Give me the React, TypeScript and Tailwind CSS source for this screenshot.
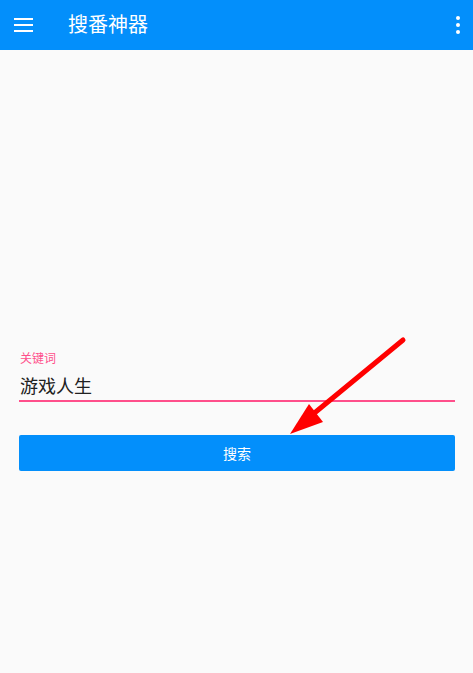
import React from "react";

export default function App() {
  const font = { fontFamily: '"Noto Sans", "Noto Sans CJK SC", sans-serif' };
  return (
    <div className="relative w-[473px] h-[673px] bg-[#fafafa] overflow-hidden" style={font}>
      <div className="h-[50px] bg-[#038ffb] flex items-center">
        <div className="w-[68px] pl-[14px] flex flex-col gap-[4px]">
          <div className="w-[19px] h-[2px] bg-white" />
          <div className="w-[19px] h-[2px] bg-white" />
          <div className="w-[19px] h-[2px] bg-white" />
        </div>
        <div className="text-white text-[20px] leading-none font-normal">搜番神器</div>
        <div className="ml-auto mr-[13px] flex flex-col gap-[3px]">
          <div className="w-[4px] h-[4px] rounded-full bg-white" />
          <div className="w-[4px] h-[4px] rounded-full bg-white" />
          <div className="w-[4px] h-[4px] rounded-full bg-white" />
        </div>
      </div>
      <div className="pl-[19px] pr-[18px] pt-[302px]">
        <div className="pl-[1px] text-[12px] leading-[14px] text-[#ff4f8b]">关键词</div>
        <div className="mt-[9px] pl-[1px] text-[18px] leading-[22px] text-[#212121]">游戏人生</div>
        <div className="mt-[3px] h-[2px] bg-[#ff4f8b]" />
        <button className="mt-[33px] w-full h-[36px] rounded-[2px] bg-[#038ffb] text-white text-[14px] flex items-center justify-center">
          搜索
        </button>
      </div>
      <svg className="absolute left-0 top-0" width="473" height="673" viewBox="0 0 473 673">
        <line x1="403" y1="340" x2="312" y2="415" stroke="#ff0000" strokeWidth="5" strokeLinecap="round" />
        <polygon points="290,434 309,404 323,422" fill="#ff0000" />
      </svg>
    </div>
  );
}
